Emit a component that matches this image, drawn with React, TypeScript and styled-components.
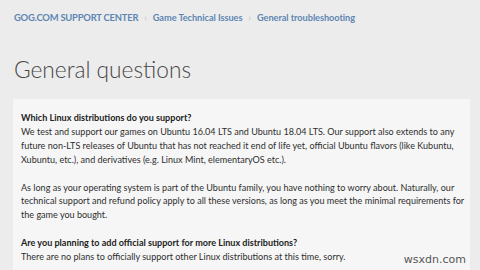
import React, { FC } from "react"
import styled, { createGlobalStyle } from "styled-components"

const Global = createGlobalStyle`
  html, body {
    margin: 0;
    padding: 0;
    background: #ececec;
  }
  body {
    font-family: Lato, "Open Sans", sans-serif;
    overflow: hidden;
  }
`

const Page = styled.div`
  position: relative;
  width: 480px;
  height: 270px;
  padding: 0 10px 0 13px;
  box-sizing: border-box;
  overflow: hidden;
`

const Crumbs = styled.nav`
  display: flex;
  align-items: center;
  height: 34px;
  padding-left: 1px;
  font-weight: 700;
  color: #5d86b2;
`

const Crumb = styled.span<{ $caps?: boolean }>`
  font-size: ${p => (p.$caps ? "9.4px" : "9.2px")};
  letter-spacing: ${p => (p.$caps ? "-0.2px" : "-0.05px")};
  white-space: nowrap;
`

const Sep = styled.span`
  color: #c4c4c4;
  font-size: 9px;
  font-weight: 400;
  margin: 0 6px;
`

const Title = styled.h1`
  margin: 19px 0 0 1px;
  font-size: 22.7px;
  font-weight: 300;
  color: #474747;
  line-height: 34px;
`

const Card = styled.section`
  margin-top: 12px;
  background: #f6f6f6;
  padding: 12px 0 20px 8px;
  font-size: 9.05px;
  line-height: 13.9px;
  color: #2e2e2e;
`

const Para = styled.p`
  margin: 0 0 13.9px;
`

const Line = styled.span`
  display: block;
  white-space: nowrap;
`

const Question = styled(Line)`
  font-weight: 700;
  color: #222;
`

const Watermark = styled.div`
  position: absolute;
  right: 14px;
  bottom: 4px;
  font-family: "DejaVu Sans", sans-serif;
  font-size: 11px;
  color: #555;
  background: #f6f6f6;
`

const paragraphs: { q?: string; lines: string[] }[] = [
  {
    q: "Which Linux distributions do you support?",
    lines: [
      "We test and support our games on Ubuntu 16.04 LTS and Ubuntu 18.04 LTS. Our support also extends to any",
      "future non-LTS releases of Ubuntu that has not reached it end of life yet, official Ubuntu flavors (like Kubuntu,",
      "Xubuntu, etc.), and derivatives (e.g. Linux Mint, elementaryOS etc.).",
    ],
  },
  {
    lines: [
      "As long as your operating system is part of the Ubuntu family, you have nothing to worry about. Naturally, our",
      "technical support and refund policy apply to all these versions, as long as you meet the minimal requirements for",
      "the game you bought.",
    ],
  },
  {
    q: "Are you planning to add official support for more Linux distributions?",
    lines: ["There are no plans to officially support other Linux distributions at this time, sorry."],
  },
]

const App: FC = () => (
  <>
    <Global />
    <Page>
      <Crumbs>
        <Crumb $caps>GOG.COM SUPPORT CENTER</Crumb>
        <Sep>›</Sep>
        <Crumb>Game Technical Issues</Crumb>
        <Sep>›</Sep>
        <Crumb>General troubleshooting</Crumb>
      </Crumbs>

      <Title>General questions</Title>

      <Card>
        {paragraphs.map((p, i) => (
          <Para key={i}>
            {p.q && <Question as="strong">{p.q}</Question>}
            {p.lines.map(l => (
              <Line key={l}>{l}</Line>
            ))}
          </Para>
        ))}
      </Card>

      <Watermark>wsxdn.com</Watermark>
    </Page>
  </>
)

export default App
